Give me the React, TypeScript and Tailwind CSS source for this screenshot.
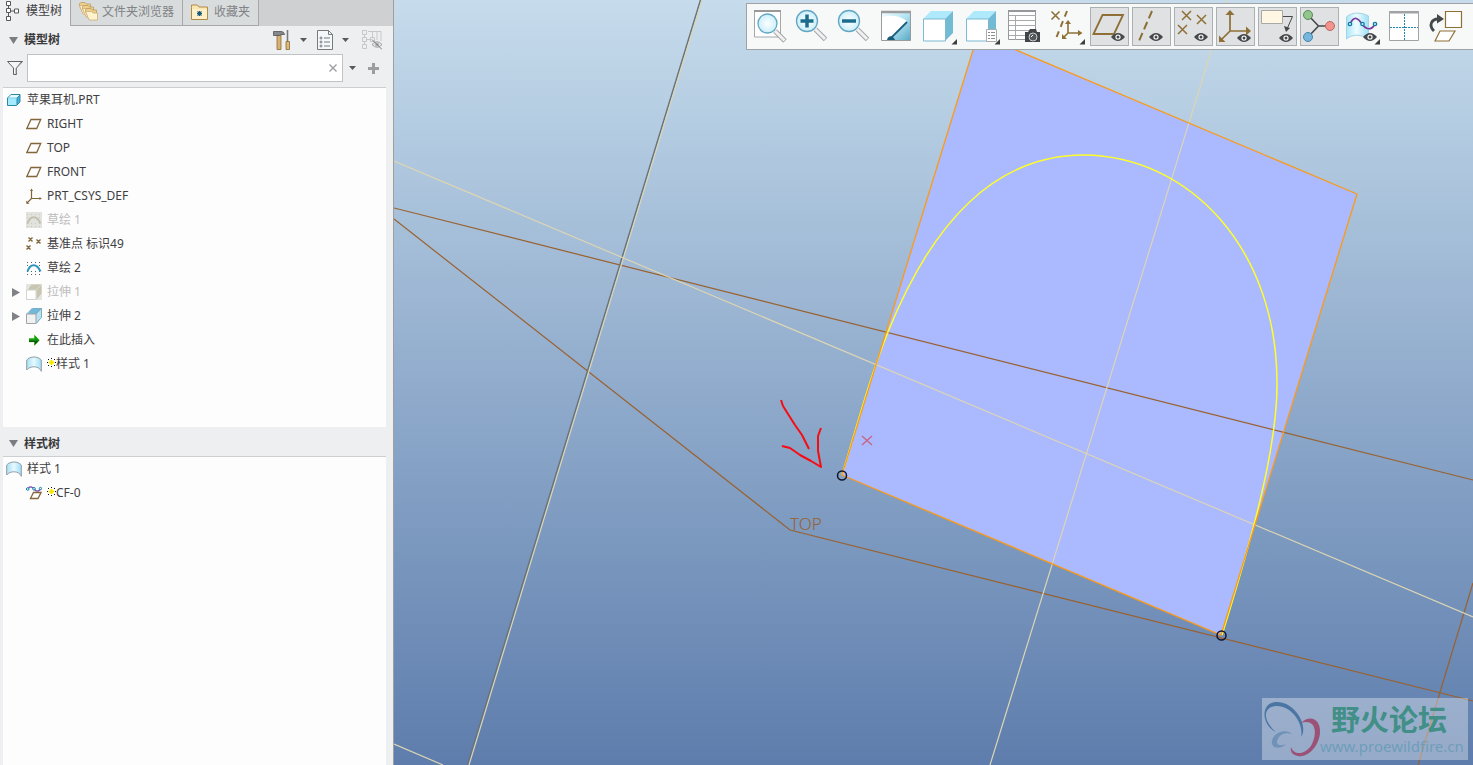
import type { ReactNode } from 'react'

const GOLD = '#8e7037'

type TreeItem = { label: string; icon: ReactNode; root?: boolean; muted?: boolean; branch?: boolean; flagged?: boolean }

function Icon({ children }: { children: ReactNode }) {
  return <svg viewBox="0 0 16 16" className="size-4 shrink-0" fill="none" aria-hidden="true">{children}</svg>
}

function PartIcon() {
  return (
    <Icon>
      <path d="M2 6 5.500 2.500H14L11 6Z" fill="#e6fbff" />
      <path d="M11 6 14 2.500V10L11 13.500Z" fill="#4bb3da" />
      <path d="M2 6h9v7.500H2z" fill="#a5ebff" />
      <path d="M1.500 6 5 2.500h9V10l-3.500 3.500h-9ZM11 6v7M11 6l3-3" stroke="#2b87a8" />
      <path d="M2 6h9" stroke="#7ccfea" />
    </Icon>
  )
}

function PlaneIcon() {
  return <Icon><path d="M.8 12.500 5 3.500h9.700l-4 9Z" stroke="#82663a" strokeWidth="1.300" /></Icon>
}

function CsysIcon() {
  return (
    <Icon>
      <path d="M5.500 2v8.500H15M5.500 10.500 1 15" stroke="#82663a" strokeWidth="1.200" />
      <path d="m4 3 1.500-2.500L7 3ZM13.500 9l2.300 1.500-2.300 1.500ZM.3 12.500v3.200h3.200Z" fill="#82663a" />
    </Icon>
  )
}

function SketchIcon({ muted }: { muted?: boolean }) {
  return (
    <Icon>
      {muted && <path d="M0 0h16v16H0z" fill="#e2e2df" />}
      <path d="M1 2.500h15M1 5.500h15M1 11.500h15M1 14.500h15" stroke={muted ? '#c9c9c3' : '#4a6470'} strokeDasharray="1 3" />
      <path d="M1.500 11.500C4 3 11 3 14.500 11.500" stroke={muted ? '#c3c1ae' : '#2e94bd'} strokeWidth="2" />
    </Icon>
  )
}

function PointsIcon() {
  return <Icon><path d="m2.500 1.500 4 4m0-4-4 4m8-2 4 4m0-4-4 4m-10 2 4 4m0-4-4 4" stroke="#82663a" strokeWidth="1.400" /></Icon>
}

function ExtrudeIcon({ muted }: { muted?: boolean }) {
  return (
    <Icon>
      {muted && <path d="M0 0h16v16H0z" fill="#e4e4e0" />}
      <path d="M5.500.5h10v9l-5 6v-9h-9Z" fill={muted ? '#c8c5b1' : '#72b9d8'} />
      {!muted && <path d="m10 6 5.500-5.500v9L10 15Z" fill="#b9e1f1" />}
      <path d={muted ? 'm10 6 5.500-5.500' : 'm.5 6 6-5.500h9v9l-5.500 6M10 6l5.500-5.500'} stroke={muted ? '#dddbd0' : '#79aec5'} />
      <path d="M.5 6h9.500v9.500H.5z" fill={muted ? '#fff' : '#f1f1f2'} stroke={muted ? '#d3d3cf' : '#9da3a7'} />
    </Icon>
  )
}

function StyleIcon() {
  return (
    <Icon>
      <defs>
        <linearGradient id="sheet"><stop stopColor="#a7dff4" /><stop offset=".5" stopColor="#e6faff" /><stop offset="1" stopColor="#9edef7" /></linearGradient>
      </defs>
      <path d="M.7 4C4 0 12 0 15.300 4v11.300C13 9.500 4 9.500.7 14Z" fill="url(#sheet)" stroke="#929da4" />
    </Icon>
  )
}

function InsertIcon() {
  return (
    <Icon>
      <path d="M3 6.300h5V2.500l5.500 5.700L8 14v-3.800H3Z" fill="#8fe640" />
      <path d="M3 6.500h5.500V3l5 5.200H3Z" fill="#08a010" />
      <path d="M3 8.200h10.500l-5 5.300V10H3Z" fill="#075c0b" />
    </Icon>
  )
}

function CurveIcon() {
  return (
    <Icon>
      <path d="M1 5C4-1 7 3 9 5s4 1 5.500-1" stroke="#8747bd" strokeWidth="1.400" />
      <g stroke="#1685a6" fill="#d9f7ff"><circle cx="1.700" cy="4" r="1.300" /><circle cx="8" cy="3.800" r="1.300" /><circle cx="14.500" cy="3.500" r="1.200" /></g>
      <path d="m4.500 13.500 3-6H15l-3 6Z" fill="#fff" stroke="#82663a" strokeWidth="1.300" />
    </Icon>
  )
}

function Spark() {
  return (
    <svg viewBox="0 0 9 9" className="mb-1 size-[9px] shrink-0" aria-hidden="true">
      <path d="M2.500 2.500h4v4h-4z" fill="#fff200" />
      <path d="M4 .5h1M4 8.500h1M.5 4v1M8.500 4v1M1 1.500h1M7 1.500h1M1 7.500h1M7 7.500h1M4 2.500h1M4 6.500h1" stroke="#111" strokeWidth="1.200" />
      <path d="M2 4.500h5M4.500 2v5" stroke="#f2e600" />
    </svg>
  )
}

const MODEL_TREE: TreeItem[] = [
  { label: '苹果耳机.PRT', icon: <PartIcon />, root: true },
  { label: 'RIGHT', icon: <PlaneIcon /> },
  { label: 'TOP', icon: <PlaneIcon /> },
  { label: 'FRONT', icon: <PlaneIcon /> },
  { label: 'PRT_CSYS_DEF', icon: <CsysIcon /> },
  { label: '草绘 1', icon: <SketchIcon muted />, muted: true },
  { label: '基准点 标识49', icon: <PointsIcon /> },
  { label: '草绘 2', icon: <SketchIcon /> },
  { label: '拉伸 1', icon: <ExtrudeIcon muted />, muted: true, branch: true },
  { label: '拉伸 2', icon: <ExtrudeIcon />, branch: true },
  { label: '在此插入', icon: <InsertIcon /> },
  { label: '样式 1', icon: <StyleIcon />, flagged: true },
]

const STYLE_TREE: TreeItem[] = [
  { label: '样式 1', icon: <StyleIcon />, root: true },
  { label: 'CF-0', icon: <CurveIcon />, flagged: true },
]

function Tree({ items }: { items: TreeItem[] }) {
  return (
    <ul>
      {items.map((item, i) => (
        <li key={i} className={`flex h-6 items-center ${item.root ? 'pl-[3px]' : 'pl-2'} ${item.muted ? 'text-[#bcbcbc]' : 'text-[#3f4042]'}`}>
          {!item.root && (
            <span className="flex w-[15px] shrink-0">
              {item.branch && (
                <button aria-label={`展开 ${item.label}`}>
                  <svg viewBox="0 0 8 9" className="ml-px h-[9px] w-2"><path d="M0 0v9l8-4.500Z" fill="#808285" /></svg>
                </button>
              )}
            </span>
          )}
          {item.icon}
          <span className="ml-[5px] flex items-center">{item.flagged && <Spark />}{item.label}</span>
        </li>
      ))}
    </ul>
  )
}

function Caret() {
  return <svg viewBox="0 0 7 4" className="h-1 w-[7px]"><path d="M0 0h7L3.500 4Z" fill="#58595b" /></svg>
}

function PaneTitle({ children }: { children: ReactNode }) {
  return (
    <h2 className="flex items-center gap-1.5 font-bold text-[#38393b]">
      <svg viewBox="0 0 9 7" className="h-[7px] w-[9px]"><path d="M0 0h9L4.500 7Z" fill="#7b7d80" /></svg>
      {children}
    </h2>
  )
}

function FoldersIcon() {
  return (
    <svg viewBox="0 0 19 19" className="size-[19px]" aria-hidden="true">
      {[0, 3, 6].map(d => (
        <g key={d} transform={`translate(${d} ${d})`}>
          <path d="M.5 3.500V1.500L2 .5h4L7.500 2h4v9H4Z" fill="#eecf8d" stroke="#b8975b" strokeWidth=".7" />
          <path d="M.5 3.500h6L8 5h4.500v7H4Z" fill="#fff2cf" stroke="#c8a66a" strokeWidth=".7" />
        </g>
      ))}
    </svg>
  )
}

function FavoritesIcon() {
  return (
    <svg viewBox="0 0 17 16" className="h-4 w-[17px]" aria-hidden="true">
      <path d="M.5 3.500V1h6l1.500 2h8.500v12.500H.5Z" fill="#fbe5af" stroke="#b08a48" />
      <path d="M1 5h15v10H1z" fill="#fff0c9" />
      <path d="M8.500 7v5M6.500 7.500l4 4m0-4-4 4M6 9.500h5" stroke="#185b78" strokeWidth="1.100" />
    </svg>
  )
}

function Sidebar() {
  return (
    <aside className="flex w-[394px] shrink-0 flex-col border-r border-[#9d9fa2] bg-[#eeeff1]">
      <nav className="flex h-[26px] shrink-0 bg-[#cfd0d1] text-[#808285]">
        <button className="flex w-[71px] items-center gap-1.5 border-r border-[#a5a7a9] bg-[#eeeff1] pb-1 pl-1.5 text-[#3f4042]">
          <svg viewBox="0 0 14 20" className="h-5 w-3.5" fill="#fff" stroke="#55585b" aria-hidden="true">
            <path d="M2.500 5v10M5 10h4" />
            <path d="M.5.500h4v4h-4zM.5 7.500h4v4h-4zM.5 15.500h4v4h-4zM8.500 8h4v4h-4z" />
          </svg>
          模型树
        </button>
        <button className="flex w-[112px] items-center gap-1 border-r border-b border-[#a5a7a9] bg-[#d9dcdd] pb-0.5 pl-2">
          <FoldersIcon />文件夹浏览器
        </button>
        <button className="flex w-[76px] items-center gap-1.5 border-r border-b border-[#a5a7a9] bg-[#d9dcdd] pb-0.5 pl-2">
          <FavoritesIcon />收藏夹
        </button>
      </nav>

      <div className="flex h-7 shrink-0 items-center justify-between pr-[11px] pl-[9px]">
        <PaneTitle>模型树</PaneTitle>
        <div className="flex items-center">
          <button className="flex items-center gap-[9px]" aria-label="设置">
            <svg viewBox="0 0 18 20" className="h-5 w-[18px]">
              <path d="M4 5h4v14.500H4z" fill="#d7b273" stroke="#8b6936" strokeWidth=".8" />
              <path d="M.5 5.500V1.500H8c2 0 3 1 3.500 3H8l-1.500 1H3Z" fill="#85888b" stroke="#505356" strokeWidth=".8" />
              <path d="M14.500 0v12" stroke="#777a7d" strokeWidth="1.600" />
              <path d="M13 11.500h3.500v8H13z" fill="#ddb978" stroke="#8b6936" strokeWidth=".8" />
            </svg>
            <Caret />
          </button>
          <button className="ml-2.5 flex items-center gap-[9px]" aria-label="显示">
            <svg viewBox="0 0 16 20" className="h-5 w-4" fill="none" stroke="#77797c">
              <path d="M.5.500h11l4 4v15H.5z" fill="#f5f8fa" />
              <path d="M11.500.5v4h4M7 8h6M7 12h6M7 16h6" />
              <circle cx="4" cy="8" r="1" /><circle cx="4" cy="12" r="1" /><circle cx="4" cy="16" r="1" />
            </svg>
            <Caret />
          </button>
          <button className="ml-3 pl-px" aria-label="隐藏">
            <svg viewBox="0 0 20 20" className="size-5" fill="none" stroke="#c6c7c9">
              <path d="M.5.500h4v4h-4zM.5 7.500h4v4h-4zM.5 14.500h4v4h-4zM8.500 7.500h4v4h-4zM2.500 5v2m0 5v2M5 9.500h3M6 1.500h13V11M10.500 2v5M15 2v8" />
              <path d="M10 14.500q5-5.500 10 0-5 5.500-10 0" stroke="#9a9c9e" />
              <circle cx="15" cy="14.500" r="2" fill="#aaa" /><path d="m10 9.500 10 10" stroke="#77797b" />
            </svg>
          </button>
        </div>
      </div>

      <div className="flex h-7 shrink-0 items-center pr-3.5 pl-[7px]">
        <svg viewBox="0 0 16 16" className="mr-1 size-4 shrink-0" aria-hidden="true">
          <path d="M.5 1.500h15L9.500 8v6.500h-3V8Z" fill="#f5f5f5" stroke="#606265" /><path d="M9 8v6M10 7l4-5" stroke="#999b9d" />
        </svg>
        <div className="flex h-full flex-1 items-center border border-[#bfc3c7] bg-white pr-[5px]">
          <input type="text" aria-label="过滤" className="min-w-0 flex-1 px-1 outline-none" />
          <button aria-label="清除">
            <svg viewBox="0 0 8 8" className="size-2"><path d="m.5.500 7 7m0-7-7 7" stroke="#999b9e" strokeWidth="1.300" /></svg>
          </button>
        </div>
        <button className="mr-3 ml-1.5" aria-label="过滤选项"><Caret /></button>
        <button aria-label="添加">
          <svg viewBox="0 0 11 11" className="size-[11px]"><path d="M5.500 0v11M0 5.500h11" stroke="#9b9da0" strokeWidth="3" /></svg>
        </button>
      </div>

      <div className="mt-[5px] mr-[7px] ml-[3px] h-[340px] shrink-0 border-t border-[#ccced0] bg-[#fdfdfd]">
        <Tree items={MODEL_TREE} />
      </div>
      <div className="flex h-[29px] shrink-0 items-center pt-1 pl-[9px]"><PaneTitle>样式树</PaneTitle></div>
      <div className="mr-[7px] ml-[3px] flex-1 border-t border-[#ccced0] bg-[#fdfdfd]">
        <Tree items={STYLE_TREE} />
      </div>
    </aside>
  )
}

function Eye({ x, y }: { x: number; y: number }) {
  return (
    <g transform={`translate(${x} ${y})`}>
      <path d="M-7 0Q0-8 7 0 0 8-7 0Z" fill="#45494c" />
      <circle r="2.600" fill="#fff" /><circle r="1.500" fill="#45494c" />
    </g>
  )
}

function Corner({ x }: { x: number }) {
  return <path d={`M${x} 32v5.500h-5.500Z`} fill="#3c3e40" />
}

function Lens({ x, y, r }: { x: number; y: number; r: number }) {
  return (
    <>
      <path d={`m${x + r - 2} ${y + r - 2} 10 10`} stroke="#a2a4a7" strokeWidth="5" />
      <path d={`m${x + r - 2} ${y + r - 2} 9.500 9.500`} stroke="#f1f1f1" strokeWidth="3" />
      <circle cx={x} cy={y} r={r} fill="url(#glass)" stroke="#62a6c1" strokeWidth="1.300" />
    </>
  )
}

function Cube() {
  return (
    <>
      <path d="m5 12 8-8h22l-8 8Z" fill="#aee9fc" /><path d="m27 12 8-8v22l-8 8Z" fill="#73bad5" />
      <path d="M5.500 12h22v22h-22z" fill="#fff" stroke="#7db9cf" />
    </>
  )
}

const TOOLS: { name: string; on?: boolean; wide?: boolean; art: ReactNode }[] = [
  { name: '重新调整', art: <><path d="M4.500 4h26v26h-26z" fill="#fff" stroke="#a4a6a8" /><path d="M4 4h27" stroke="#999" strokeWidth="2" /><Lens x={17.5} y={16.5} r={9.5} /></> },
  { name: '放大', art: <><Lens x={15} y={14} r={10.5} /><path d="M15 7.500v13M8.500 14h13" stroke="#1c6c8d" strokeWidth="3.500" /></> },
  { name: '缩小', art: <><Lens x={15} y={14} r={10.5} /><path d="M8 14h14" stroke="#1c6c8d" strokeWidth="3.500" /></> },
  {
    name: '重画',
    art: (
      <>
        <path d="M5.500 5h29v28.500h-29z" fill="url(#sky)" stroke="#999b9d" />
        <path d="M6 33V10Q20 6 31 14L15 33Z" fill="#fff" />
        <path d="M5 5h30" stroke="#999b9d" strokeWidth="2.500" />
        <path d="m15 31 16-16" stroke="#185d7c" strokeWidth="1.800" /><path d="M11 33c1-5 6-5 8 0Z" fill="#185d7c" />
      </>
    ),
  },
  { name: '显示样式', wide: true, art: <><Cube /><Corner x={39} /></> },
  {
    name: '已保存方向', wide: true,
    art: (
      <>
        <g transform="translate(-1 0)"><Cube /></g>
        <path d="M24.500 22.500h10v12h-10z" fill="#fff" stroke="#a9abad" />
        <path d="M26 25.500h2m1 0h4m-7 3h2m1 0h4m-7 3h2m1 0h4" stroke="#8a8c8e" />
        <Corner x={38} />
      </>
    ),
  },
  {
    name: '视图管理器',
    art: (
      <>
        <path d="M2.500 3.500h27v29h-27z" fill="#fff" stroke="#96989a" />
        <path d="M2 4h28" stroke="#96989a" strokeWidth="2" />
        <path d="M3 8.500h27M3 13.500h27M3 18.500h27M3 23.500h27M3 28.500h27M9.500 8v25" stroke="#a8aaac" />
        <path d="M19 25h3l2-3h6l1 3h3v10H19Z" fill="#424548" /><circle cx="27" cy="30" r="4" fill="#55585b" stroke="#c9cbcc" strokeWidth="1" /><path d="m25 30 2-2" stroke="#fff" />
      </>
    ),
  },
  {
    name: '基准显示',
    art: (
      <>
        <path d="m3.500 4.500 8 8m0-8-8 8M20 15v11h13M20 26l-5 5" stroke={GOLD} strokeWidth="1.600" />
        <path d="M19 4 7 34" stroke={GOLD} strokeWidth="2" strokeDasharray="6 5" />
        <path d="m17 17 3-4 3 4ZM30 23l4.500 3-4.500 3ZM14 27v5h5Z" fill={GOLD} /><Corner x={37} />
      </>
    ),
  },
  { name: '平面显示', on: true, art: <><path d="m3.500 27 9-19H33l-9 19Z" stroke={GOLD} strokeWidth="1.800" /><Eye x={28} y={30} /></> },
  { name: '轴显示', on: true, art: <><path d="M20 4 7 34" stroke={GOLD} strokeWidth="2" strokeDasharray="8 4" /><Eye x={24} y={30} /></> },
  { name: '点显示', on: true, art: <><path d="m8 4 9 9m0-9-9 9m15-5 9 9m0-9-9 9M4 18l9 9m0-9-9 9" stroke={GOLD} strokeWidth="1.500" /><Eye x={27} y={30} /></> },
  {
    name: '坐标系显示', on: true,
    art: <><path d="M14 5v19h17M14 24 5 33" stroke={GOLD} strokeWidth="1.700" /><path d="m9.500 8 4.500-5 4.500 5ZM30 19.500l5 4.500-5 4.500ZM3 28.500V35h6.500Z" fill={GOLD} /><Eye x={28} y={31} /></>,
  },
  {
    name: '注释显示', on: true,
    art: <><path d="M3.500 3.500h21v13h-21z" fill="#fff6e4" stroke="#a8a8a4" /><path d="M25 9.500h9.500L29 22" stroke="#45494c" /><path d="m26 19 6 2-4 4Z" fill="#45494c" /><Eye x={28} y={31} /></>,
  },
  {
    name: '旋转中心', on: true,
    art: (
      <>
        <path d="m8 8 10.500 11L8 30m10.500-11H30" stroke="#45494c" strokeWidth="1.600" />
        <circle cx="8" cy="8" r="4.500" fill="#94c58c" stroke="#588b56" /><circle cx="30" cy="19" r="4.500" fill="#f3938b" stroke="#bd6562" /><circle cx="8" cy="30" r="4.500" fill="#76b5dc" stroke="#4688aa" />
      </>
    ),
  },
  {
    name: '样式显示',
    art: (
      <>
        <path d="M4.500 10c6-6 17-4 22-1v23c-6-4-15-6-22 0Z" fill="url(#film)" stroke="#a3d3e4" />
        <path d="M8 17C13 6 18 14 20 17s8 9 13 0" stroke="#7b3c9f" strokeWidth="1.700" />
        <g fill="#baf2ff" stroke="#1678a0" strokeWidth="1.300"><circle cx="8" cy="17" r="1.700" /><circle cx="20.500" cy="17" r="1.700" /><circle cx="33" cy="17" r="1.700" /></g>
        <Eye x={28} y={30} /><Corner x={38} />
      </>
    ),
  },
  {
    name: '四视图',
    art: <><path d="M5.500 4.500h29v29h-29z" fill="#fff" stroke="#a0a2a4" /><path d="M5 5.500h30" stroke="#a0a2a4" strokeWidth="2" /><path d="M20.500 7v26M6 20.500h28" stroke="#2586b0" strokeDasharray="2 1" /></>,
  },
  {
    name: '活动平面方向',
    art: <><path d="M19.500 4.500h16v16h-16zM9 34l5-10h15l-6 10Z" fill="#fff" stroke={GOLD} strokeWidth="1.200" /><path d="M8 24C2 18 6 12 12 12" stroke="#45494c" strokeWidth="2.800" /><path d="m11 7 7 5-7 4.500Z" fill="#45494c" /></>,
  },
]

function Toolbar() {
  return (
    <div className="absolute top-[3px] right-0 flex gap-[3px] border border-r-0 border-[#a0a3a6] bg-[#f7f8f8] py-[3px] pr-2 pl-[3px]">
      {TOOLS.map(tool => (
        <button
          key={tool.name}
          aria-label={tool.name}
          className={`h-[39px] shrink-0 ${tool.wide ? 'w-[41px]' : 'w-[39px]'} ${tool.on ? 'bg-[#dfe1e3] ring-1 ring-[#adb0b2] ring-inset' : ''}`}
        >
          <svg viewBox="0 0 39 39" className="size-[39px]" fill="none">{tool.art}</svg>
        </button>
      ))}
    </div>
  )
}

function Viewport() {
  return (
    <main className="relative min-w-0 flex-1 overflow-hidden bg-linear-to-b from-[#c6dcec] to-[#5e7dac]">
      <svg viewBox="394 0 1079 765" preserveAspectRatio="xMinYMin slice" className="block size-full" fill="none">
        <defs>
          <linearGradient id="sky" x1="0" y1="0" x2="1" y2="1"><stop stopColor="#f4fdff" /><stop offset=".5" stopColor="#b4e4f3" /><stop offset="1" stopColor="#58a8c5" /></linearGradient>
          <linearGradient id="film"><stop stopColor="#a8e6f9" /><stop offset=".45" stopColor="#eefcff" /><stop offset="1" stopColor="#9fe0f6" /></linearGradient>
          <radialGradient id="glass"><stop stopColor="#fff" /><stop offset="1" stopColor="#caeffb" /></radialGradient>
        </defs>
        <path d="M842 475 978 34l379 160-136 441Z" fill="#abb9ff" />
        <path d="m394 208 1079 272M394 219l396 311 683 171M1473 583l-55 182" stroke="#99612f" strokeWidth="1.200" />
        <path d="M700.500 0 467.500 765" stroke="#68737b" strokeWidth="1.500" />
        <path d="M702 0 469 765M394 161l1079 456M1227 0 990 765M394 744l49 21" stroke="#dcd5b4" strokeWidth="1.200" />
        <path d="M842 475C862 408 872 372 888 332 935 215 1000 155 1084 155c106 1 194 95 193 230 0 65-27 160-55 250" stroke="#ffff28" strokeWidth="1.500" />
        <path d="M842 475 978 34l379 160-136 441Z" stroke="#fb9a18" strokeWidth="1.300" />
        <path d="m862 436 10 9m0-9-10 9" stroke="#c7627b" strokeWidth="1.200" />
        <g stroke="#11142b" strokeWidth="1.500"><circle cx="842" cy="475.500" r="4.500" /><circle cx="1221.500" cy="635.500" r="4.500" /></g>
        <path d="m781 400 2 6 5 8 7 11 7 10 7 14M782 446l8 2 10 7 11 6 10 6-3-16v-15l3-8" stroke="#f80c14" strokeWidth="2" strokeLinejoin="round" />
        <text x="790" y="530" fill="#99612f" fontSize="17" fontWeight="300">TOP</text>
      </svg>
      <Toolbar />
      <div className="absolute right-[5px] bottom-[5px] flex h-[62px] w-[206px] bg-white/35">
        <svg viewBox="0 0 60 62" className="h-[62px] w-[60px] shrink-0" aria-hidden="true">
          <path fillRule="evenodd" d="M39 39C47 28 33 4 15 4-2 4-1 27 14 34-2 20 3 8 15 8c15 0 27 18 24 31Z" fill="#4b75a3" />
          <path d="M39 25c9-9 20-4 19 10-1 13-12 25-22 23-6-1-8-5-7-9 3 9 15 8 21-3 6-12 3-26-11-21Z" fill="#9b5277" />
          <path d="M30 36c-8-7-22 1-20 10 2 6 11 4 14 0-7 3-11 0-8-5 2-5 8-7 14-5Z" fill="#7092b7" />
        </svg>
        <div className="flex flex-col">
          <strong className="ml-[9px] font-['Noto_Sans_CJK_SC',sans-serif] text-[29px] leading-10 font-bold text-[#418f87]">野火论坛</strong>
          <a href="#forum" className="-ml-0.5 text-[15px] leading-4 text-[#6e9dba]">www.proewildfire.cn</a>
        </div>
      </div>
    </main>
  )
}

export default function App() {
  return (
    <div className="flex h-screen min-h-[600px] overflow-hidden font-['Noto_Sans','Noto_Sans_CJK_SC',sans-serif] text-xs">
      <Sidebar />
      <Viewport />
    </div>
  )
}
